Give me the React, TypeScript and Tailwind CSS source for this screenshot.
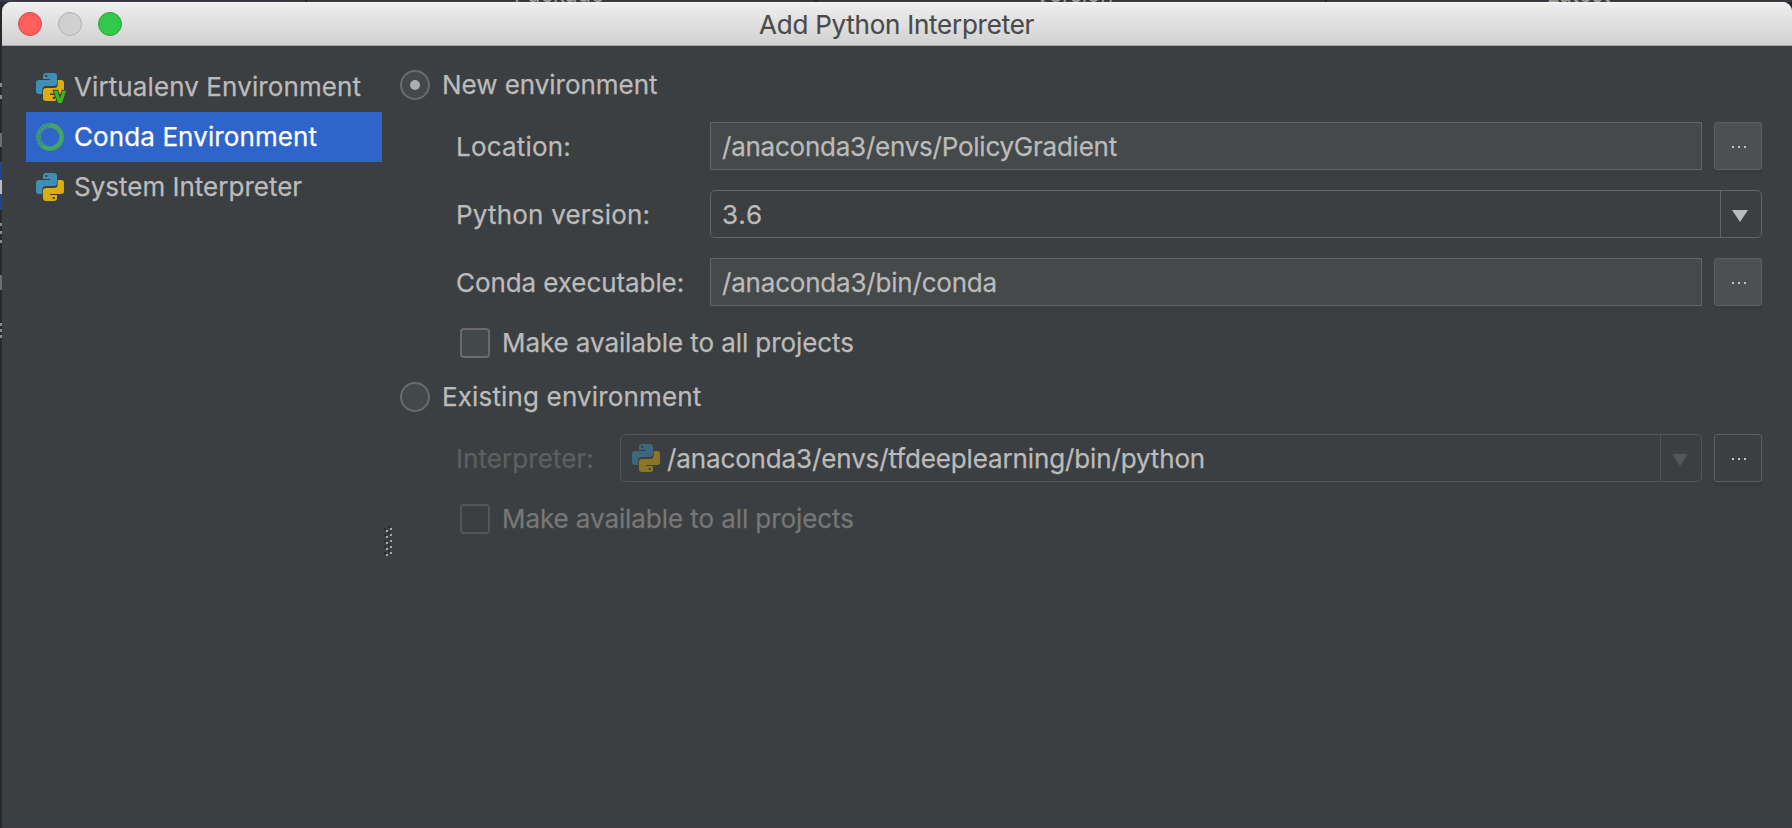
import type { ReactNode } from 'react';

function PythonIcon({ virtual = false, className = '' }: { virtual?: boolean; className?: string }) {
  const half =
    'M10 0H18Q21 0 21 3V10Q21 13 18 13H10Q6.3 13 6.3 16.5V21H3Q0 21 0 18V10Q0 7 3 7H14V6H7V3Q7 0 10 0ZM9.3 2V4H11.3V2Z';
  const letter = 'M17.8 17.7H21.4L24 25.4L26.6 17.7H30.2L25.8 30H22.2Z';
  return (
    <svg viewBox="0 0 28 28" className={`size-7 shrink-0 overflow-visible ${className}`}>
      <path d={half} fill="#3f8fb5" fillRule="evenodd" />
      <path d={half} fill="#dbae0c" fillRule="evenodd" transform="rotate(180 14 14)" />
      {virtual && (
        <g>
          <path d="M14 21.2H19M17 24.4H20" stroke="#3c3f41" strokeWidth="1.2" />
          <path d={letter} fill="#3c3f41" stroke="#3c3f41" strokeWidth="2" />
          <path d={letter} fill="#3fb618" />
        </g>
      )}
    </svg>
  );
}

const speckles: [number, number][] = [
  [12.6, 1.6], [11.4, 4.2], [9.6, 2.4], [8.6, 5.2], [6.6, 3.9], [6.4, 7], [4.2, 6.2], [4.6, 9.2], [2.2, 8.8],
  [3.9, 11.6], [1.4, 12], [3.2, 14.2], [1.2, 15.8], [4.2, 16.8], [2.2, 18.6], [4.9, 19.6], [4.2, 22], [7, 22],
];

function CondaIcon() {
  return (
    <svg viewBox="0 0 28 28" className="size-7 shrink-0">
      <circle cx="14" cy="14" r="11.6" fill="none" stroke="#43a55f" strokeWidth="4.6" />
      {speckles.map(([x, y]) => (
        <circle key={`${x}-${y}`} cx={x} cy={y} r="0.8" fill="#2f65ca" />
      ))}
    </svg>
  );
}

function Arrow({ className }: { className: string }) {
  return (
    <svg viewBox="0 0 16 12" className={`h-3 w-4 ${className}`} fill="currentColor">
      <path d="M0 0H16L8 12Z" />
    </svg>
  );
}

function BrowseButton({ flat = false }: { flat?: boolean }) {
  return (
    <button
      className={`flex size-12 shrink-0 items-center justify-center gap-1 rounded-[3px] border border-[#5e6060] pt-0.5 pl-0.5 shadow-[0_4px_0_#383a3b] ${flat ? 'bg-[#3c3f41]' : 'bg-[#4c5052]'}`}
    >
      <i className="size-0.5 bg-[#c4c4c4]" />
      <i className="size-0.5 bg-[#c4c4c4]" />
      <i className="size-0.5 bg-[#c4c4c4]" />
    </button>
  );
}

function NavItem({ icon, label, selected = false }: { icon: ReactNode; label: ReactNode; selected?: boolean }) {
  return (
    <li className={`flex h-[50px] items-center gap-[10px] pl-[10px] ${selected ? 'bg-[#2f65ca] text-white' : ''}`}>
      {icon}
      {label}
    </li>
  );
}

function Radio({ checked = false, children }: { checked?: boolean; children: ReactNode }) {
  return (
    <div className="flex h-[30px] items-center gap-3">
      <span className="flex size-[30px] items-center justify-center rounded-full border-2 border-[#6b6b6b] bg-[#43494a]">
        {checked && <span className="size-[10px] rounded-full bg-[#adadad]" />}
      </span>
      {children}
    </div>
  );
}

function Checkbox({ disabled = false }: { disabled?: boolean }) {
  return (
    <div className={`flex h-[30px] items-center gap-3 pl-[60px] ${disabled ? 'text-[#777]' : ''}`}>
      <span
        className={`size-[30px] rounded-[4px] border-2 ${disabled ? 'border-[#535557]' : 'border-[#6b6b6b] bg-[#43494a]'}`}
      />
      <span className="tracking-[-0.08px]">Make available to all projects</span>
    </div>
  );
}

const backdropRows = [
  'h-[81px] bg-[#262a30]',
  'h-[4px] bg-[#8a8a8a]',
  'h-[8px] bg-[#262a30]',
  'h-[4px] bg-[#8a8a8a]',
  'h-[34px] bg-[#262a30]',
  'h-[14px] bg-[#6e6e70]',
  'h-[15px] bg-[#262a30]',
  'h-[18px] bg-[#1f4692]',
  'h-[14px] bg-[#b8bcc4]',
  'h-[16px] bg-[#1f4692]',
  'h-[13px] bg-[#262a30]',
  'h-[3px] bg-[#8a8a8a]',
  'h-[5px] bg-[#262a30]',
  'h-[3px] bg-[#8a8a8a]',
  'h-[6px] bg-[#262a30]',
  'h-[3px] bg-[#8a8a8a]',
  'h-[32px] bg-[#262a30]',
  'h-[15px] bg-[#6e6e70]',
  'h-[33px] bg-[#262a30]',
  'h-[3px] bg-[#8a8a8a]',
  'h-[3px] bg-[#262a30]',
  'h-[3px] bg-[#8a8a8a]',
  'h-[3px] bg-[#262a30]',
  'h-[3px] bg-[#8a8a8a]',
];

export default function App() {
  return (
    <div className="flex h-[828px] w-[1792px] flex-col overflow-hidden bg-[#262a30] font-['Inter','Liberation_Sans',sans-serif] text-[26px] leading-[30px] text-[#bbbbbb]">
      <div className="relative h-0.5 shrink-0 overflow-hidden bg-[#39373b]">
        <div className="absolute inset-y-0 left-0 w-[278px] bg-[#373a45]" />
        <div className="absolute inset-y-0 left-[305px] w-0.5 bg-[#262628]" />
        <div className="absolute inset-y-0 left-[815px] w-0.5 bg-[#262628]" />
        <div className="absolute inset-y-0 left-[1325px] w-0.5 bg-[#262628]" />
        <span className="absolute -top-[20px] left-[514px] text-[22px] leading-[28px] text-[#a0a09a]">Package</span>
        <span className="absolute -top-[20px] left-[1035px] text-[22px] leading-[28px] text-[#a0a09a]">Version</span>
        <span className="absolute -top-[20px] left-[1547px] text-[22px] leading-[28px] text-[#a0a09a]">Latest</span>
      </div>

      <div className="flex min-h-0 flex-1">
        <div className="w-0.5 shrink-0">
          {backdropRows.map((row, i) => (
            <div key={i} className={row} />
          ))}
        </div>

        <div className="flex min-w-0 flex-1 flex-col overflow-hidden rounded-t-[9px] border-b border-[#403a42] bg-[#3c3f41]">
          <header className="flex h-11 shrink-0 items-center border-b border-[#a6a6a6] bg-linear-to-b from-[#efefef] to-[#d1d1d1] pl-4 shadow-[inset_0_1px_0_#f7f7f7]">
            <div className="flex w-[741px] gap-4">
              <i className="size-6 rounded-full border border-[#e0443e] bg-[#ff605c]" />
              <i className="size-6 rounded-full border border-[#b0b0b0] bg-[#d0d0d0]" />
              <i className="size-6 rounded-full border border-[#24a535] bg-[#34c84a]" />
            </div>
            <span className="pt-[3px] tracking-[-0.24px] text-[#4a4a4a] [-webkit-text-stroke:0.15px]">Add Python Interpreter</span>
          </header>

          <div className="flex min-h-0 flex-1 [-webkit-text-stroke:0.25px]">
            <aside className="w-[380px] shrink-0 pt-4 pl-6">
              <ul>
                <NavItem icon={<PythonIcon virtual />} label={<span className="tracking-[0.1px]">Virtualenv Environment</span>} />
                <NavItem icon={<CondaIcon />} label={<span className="tracking-[0.1px]">Conda Environment</span>} selected />
                <NavItem icon={<PythonIcon />} label={<span>System Interpreter</span>} />
              </ul>
            </aside>

            <div className="w-[18px] shrink-0 pt-[480px] pl-0.5">
              <svg viewBox="0 0 8 30" className="h-[30px] w-2">
                {[0, 6, 12, 18, 24].map((y) => (
                  <g key={y}>
                    <path d={`M0 ${y + 2}h2v2h-2zM4 ${y}h2v2h-2z`} fill="#292b2c" />
                    <path d={`M2 ${y + 4}h2v2h-2zM6 ${y + 2}h2v2h-2z`} fill="#a9a9a9" />
                  </g>
                ))}
              </svg>
            </div>

            <main className="flex min-w-0 flex-1 flex-col pt-6 pr-[30px]">
              <Radio checked>
                <span className="tracking-[-0.04px]">New environment</span>
              </Radio>

              <div className="mt-[22px] grid grid-cols-[254px_1fr] gap-y-5 pl-[56px]">
                <span className="self-center pt-0.5 tracking-[0.2px]">Location:</span>
                <div className="flex gap-3">
                  <div className="flex h-12 flex-1 items-center border border-[#646464] bg-[#45494a] pt-0.5 pl-[11px]">
                    <span className="tracking-[-0.24px]">/anaconda3/envs/PolicyGradient</span>
                  </div>
                  <BrowseButton />
                </div>

                <span className="self-center pt-0.5 tracking-[0.2px]">Python version:</span>
                <div className="flex h-12 items-center rounded-[5px] border border-[#646464] pl-[11px]">
                  <span className="flex-1 pt-0.5 tracking-[0.8px]">3.6</span>
                  <div className="flex h-full w-[41px] items-center border-l border-[#646464] pt-1 pl-[11px]">
                    <Arrow className="text-[#bbbbbb]" />
                  </div>
                </div>

                <span className="self-center pt-0.5 tracking-[-0.08px]">Conda executable:</span>
                <div className="flex gap-3">
                  <div className="flex h-12 flex-1 items-center border border-[#646464] bg-[#45494a] pt-0.5 pl-[11px]">
                    <span className="tracking-[-0.2px]">/anaconda3/bin/conda</span>
                  </div>
                  <BrowseButton />
                </div>
              </div>

              <div className="mt-[22px]">
                <Checkbox />
              </div>

              <div className="mt-6">
                <Radio>
                  <span className="tracking-[0.15px]">Existing environment</span>
                </Radio>
              </div>

              <div className="mt-[22px] flex gap-3 pl-[56px]">
                <span className="w-[152px] self-center pt-0.5 tracking-[0.06px] text-[#5d5f60]">Interpreter:</span>
                <div className="flex h-12 flex-1 items-center rounded-[5px] border border-[#535353] pl-[11px]">
                  <PythonIcon className="opacity-50" />
                  <span className="ml-[7px] flex-1 pt-0.5 tracking-[-0.13px]">/anaconda3/envs/tfdeeplearning/bin/python</span>
                  <div className="flex h-full w-[41px] items-center border-l border-[#535353] pt-1 pl-[11px]">
                    <Arrow className="text-[#555555]" />
                  </div>
                </div>
                <BrowseButton flat />
              </div>

              <div className="mt-[22px]">
                <Checkbox disabled />
              </div>
            </main>
          </div>
        </div>
      </div>
    </div>
  );
}
